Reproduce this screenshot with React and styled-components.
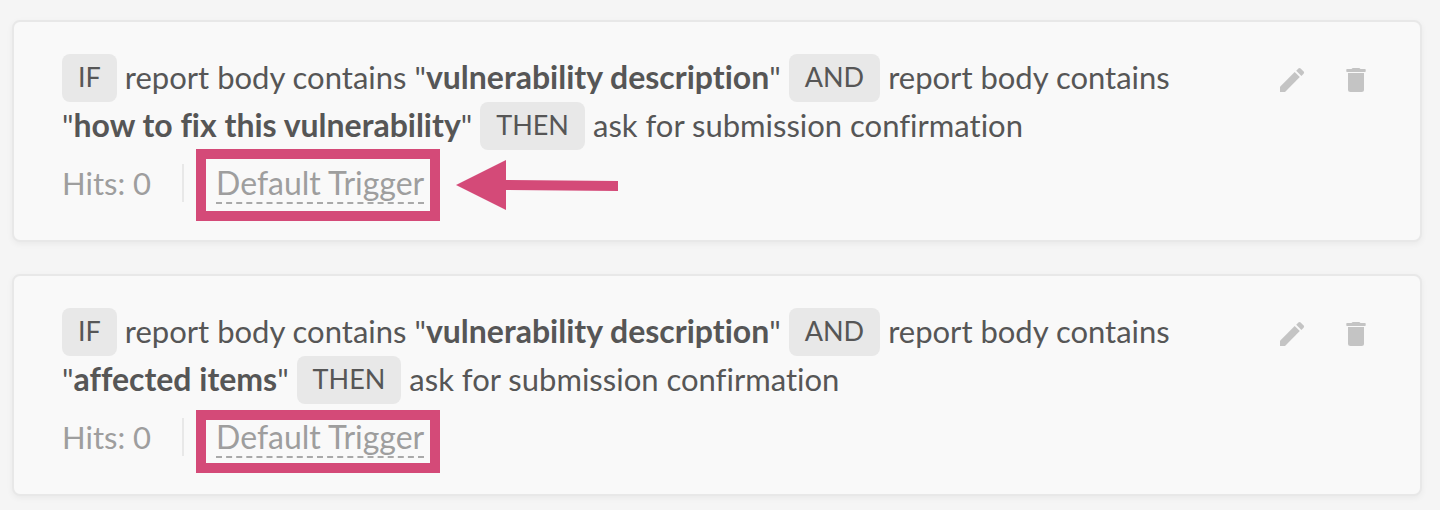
import React from "react";
import styled, { createGlobalStyle } from "styled-components";

const GlobalStyle = createGlobalStyle`
  *, *::before, *::after { box-sizing: border-box; }
  body {
    margin: 0;
    background: #f5f5f5;
    color: #565656;
    font-family: Lato, "Liberation Sans", sans-serif;
    font-variant-ligatures: none;
  }
`;

const TriggerList = styled.main`
  display: flex;
  flex-direction: column;
  gap: 32px;
  padding: 20px 18px 16px 12px;
`;

const Card = styled.article`
  display: flex;
  align-items: flex-start;
  gap: 48px;
  padding: 32px 48px 36px;
  background: #f9f9f9;
  border: 2px solid #e8e8e8;
  border-radius: 8px;
  box-shadow: 0 2px 6px rgba(0, 0, 0, 0.05);
`;

const CardBody = styled.div`
  flex: 1;
  min-width: 0;
`;

const Rule = styled.p`
  margin: 0;
  font-size: 31px;
  line-height: 46px;
`;

const Keyword = styled.span`
  display: inline-block;
  height: 48px;
  margin-right: 8px;
  padding: 0 16px;
  border-radius: 8px;
  background: #e8e8e8;
  font-size: 27px;
  line-height: 46px;
  vertical-align: top;
`;

const Phrase = styled.strong`
  font-size: 32px;
  font-weight: 700;
  line-height: 44px;
`;

const Meta = styled.div`
  display: flex;
  align-items: flex-start;
  margin-top: 14px;
  color: #9e9e9e;
  font-size: 32px;
  line-height: 38px;
`;

const Hits = styled.span`
  padding-right: 31px;
  border-right: 2px solid #e8e8e8;
  font-size: 31px;
`;

const TriggerLabel = styled.span`
  position: relative;
  margin-left: 32px;
`;

const TriggerLink = styled.a`
  display: block;
  color: inherit;
  text-decoration: none;
  border-bottom: 2px dashed #a9a9a9;
`;

const Highlight = styled.span`
  position: absolute;
  inset: ${({ $tall }) => ($tall ? "-15px -16px -17px -20px" : "-8px -16px -15px -20px")};
  border: 10px solid #d44a78;
  pointer-events: none;
`;

const Pointer = styled.svg`
  position: absolute;
  left: 100%;
  top: -4px;
  margin-left: 32px;
  width: 162px;
  height: 50px;
  fill: #d44a78;
`;

const Actions = styled.div`
  display: flex;
  gap: 32px;
  padding-top: 10px;
`;

const IconButton = styled.button`
  display: block;
  width: 32px;
  height: 32px;
  padding: 0;
  border: 0;
  background: none;
  color: #c4c4c4;
  cursor: pointer;

  svg {
    display: block;
    width: 100%;
    height: 100%;
    fill: currentColor;
  }
`;

const PencilIcon = () => (
  <svg viewBox="0 0 32 32" aria-hidden="true">
    <path d="M4 28v-5.3L18.700 8l5.100 5.100L9 28z" />
    <path d="M20.200 6.800l2.200-2.200q1.100-1 2.200 0l3 3q1 1.100 0 2.200l-2.200 2.200z" />
  </svg>
);

const TrashIcon = () => (
  <svg viewBox="0 0 32 32" aria-hidden="true">
    <path d="M7 5h4.500l1.200-1h6.600l1.200 1H25q.7 0 .7.7v1.600q0 .7-.7.7H7q-.7 0-.7-.7V5.700q0-.7.7-.7z" />
    <path d="M8 9h16v16.500q0 2.500-2.500 2.500h-11Q8 28 8 25.500z" />
  </svg>
);

const triggers = [
  { id: "fix", phrase: "how to fix this vulnerability", pointed: true },
  { id: "affected", phrase: "affected items", pointed: false },
];

function TriggerCard({ phrase, pointed }) {
  return (
    <Card>
      <CardBody>
        <Rule>
          <Keyword>IF</Keyword>report body contains "<Phrase>vulnerability description</Phrase>"{" "}
          <Keyword>AND</Keyword>report body contains "<Phrase>{phrase}</Phrase>"{" "}
          <Keyword>THEN</Keyword>ask for submission confirmation
        </Rule>
        <Meta>
          <Hits>Hits: 0</Hits>
          <TriggerLabel>
            <TriggerLink href="#default-trigger">Default Trigger</TriggerLink>
            <Highlight $tall={pointed} />
            {pointed && (
              <Pointer viewBox="0 0 162 50" aria-hidden="true">
                <path d="M0 25L50 0v20l112 1v10L50 30v20z" />
              </Pointer>
            )}
          </TriggerLabel>
        </Meta>
      </CardBody>
      <Actions>
        <IconButton type="button" aria-label="Edit trigger"><PencilIcon /></IconButton>
        <IconButton type="button" aria-label="Delete trigger"><TrashIcon /></IconButton>
      </Actions>
    </Card>
  );
}

export default function App() {
  return (
    <>
      <GlobalStyle />
      <TriggerList>
        {triggers.map(({ id, phrase, pointed }) => (
          <TriggerCard key={id} phrase={phrase} pointed={pointed} />
        ))}
      </TriggerList>
    </>
  );
}
